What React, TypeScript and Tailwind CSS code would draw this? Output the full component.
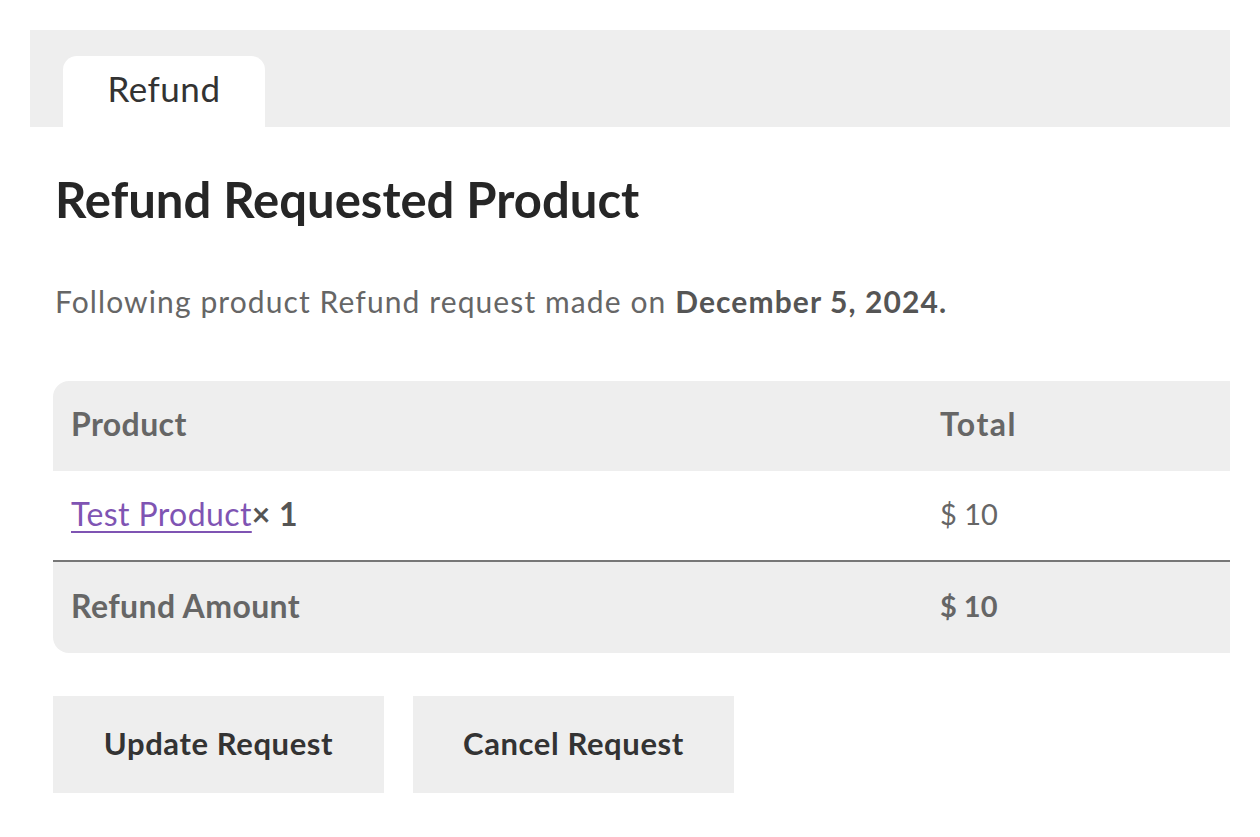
import React from 'react';

const font = { fontFamily: 'Lato, "Open Sans", sans-serif' };

function App() {
  return (
    <div className="min-h-screen bg-white pt-[30px]" style={font}>
      <div className="ml-[30px] w-[1200px] h-[97px] bg-[#eeeeee] flex items-end">
        <div className="ml-[33px] w-[202px] h-[71px] bg-white rounded-t-[14px] flex items-center justify-center pb-[6px]">
          <span className="text-[35px] tracking-[0.5px] text-[#333333]">Refund</span>
        </div>
      </div>

      <div className="ml-[53px] w-[1177px] overflow-hidden">
        <h1 className="mt-[44px] ml-[2px] text-[49px] leading-[56px] font-bold text-[#262626]">
          Refund Requested Product
        </h1>
        <p className="mt-[56px] ml-[2px] text-[30px] leading-[36px] tracking-[1.1px] text-[#666666]">
          Following product Refund request made on{' '}
          <span className="font-bold text-[#555555]">December 5, 2024.</span>
        </p>

        <div className="mt-[62px] w-[1177px] rounded-l-[16px] overflow-hidden text-[32px] tracking-[0.4px]">
          <div className="flex h-[90px] items-center pb-[4px] bg-[#eeeeee] font-bold text-[#666666]">
            <div className="w-[869px] pl-[18px]">Product</div>
            <div className="pl-[18px] tracking-[1.5px]">Total</div>
          </div>
          <div className="flex h-[91px] items-center pb-[4px] bg-white border-b-2 border-[#777777]">
            <div className="w-[869px] pl-[18px]">
              <a href="#" className="text-[#7f54b3] underline decoration-[2px] underline-offset-[5px]">Test Product</a>
              <span className="font-bold text-[#555555]">× 1</span>
            </div>
            <div className="pl-[18px] text-[29px] tracking-normal text-[#666666]">$ 10</div>
          </div>
          <div className="flex h-[91px] items-center pb-[4px] bg-[#eeeeee] font-bold text-[#666666]">
            <div className="w-[869px] pl-[18px]">Refund Amount</div>
            <div className="pl-[18px] text-[29px] tracking-normal">$ 10</div>
          </div>
        </div>

        <div className="mt-[43px] flex gap-[29px]">
          <button className="w-[331px] h-[97px] pb-[3px] bg-[#eeeeee] text-[31px] tracking-[0.6px] font-bold text-[#333333]">
            Update Request
          </button>
          <button className="w-[321px] h-[97px] pb-[3px] bg-[#eeeeee] text-[31px] tracking-[0.6px] font-bold text-[#333333]">
            Cancel Request
          </button>
        </div>
      </div>
    </div>
  );
}

export default App;
